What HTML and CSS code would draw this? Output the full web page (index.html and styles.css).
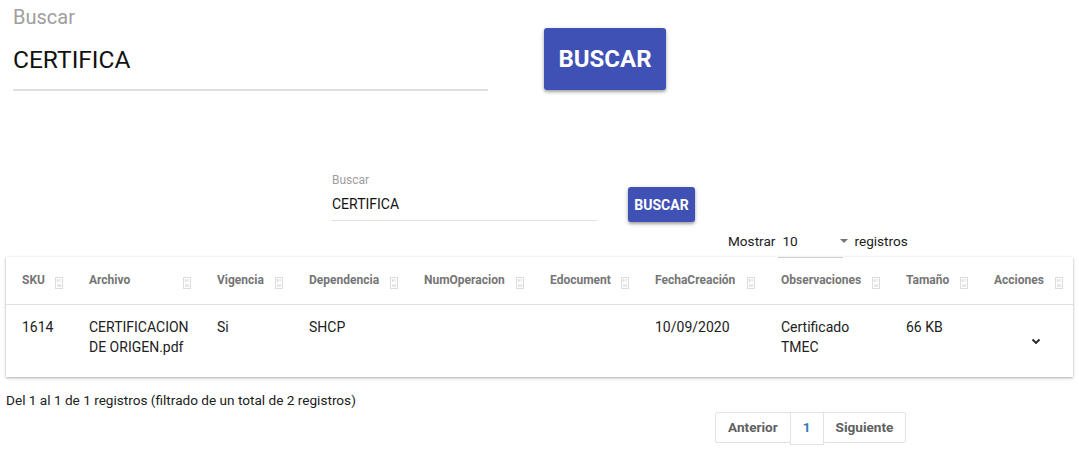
FILE: index.html
```html
<!DOCTYPE html>
<html lang="es">
<head>
<meta charset="utf-8">
<link rel="stylesheet" href="styles.css">
</head>
<body>
<div class="top-search">
  <div class="field big">
    <div class="label">Buscar</div>
    <div class="value">CERTIFICA</div>
  </div>
  <button class="btn big-btn">BUSCAR</button>
</div>

<div class="small-search">
  <div class="field small">
    <div class="label">Buscar</div>
    <div class="value">CERTIFICA</div>
  </div>
  <button class="btn small-btn">BUSCAR</button>
</div>

<div class="length">
  <span>Mostrar</span>
  <span class="select"><span>10</span><span class="caret"></span></span>
  <span>registros</span>
</div>

<div class="card">
  <table class="grid">
    <colgroup>
      <col style="width:67px"><col style="width:128px"><col style="width:92px"><col style="width:115px"><col style="width:126px"><col style="width:105px"><col style="width:126px"><col style="width:125px"><col style="width:88px"><col style="width:95px">
    </colgroup>
    <thead>
      <tr>
        <th><div class="th"><span>SKU</span><span class="sort"><i>E1</i><i>5E</i></span></div></th>
        <th><div class="th"><span>Archivo</span><span class="sort"><i>E1</i><i>50</i></span></div></th>
        <th><div class="th"><span>Vigencia</span><span class="sort"><i>E1</i><i>50</i></span></div></th>
        <th><div class="th"><span>Dependencia</span><span class="sort"><i>E1</i><i>50</i></span></div></th>
        <th><div class="th"><span>NumOperacion</span><span class="sort"><i>E1</i><i>50</i></span></div></th>
        <th><div class="th"><span>Edocument</span><span class="sort"><i>E1</i><i>50</i></span></div></th>
        <th><div class="th"><span>FechaCreación</span><span class="sort"><i>E1</i><i>50</i></span></div></th>
        <th><div class="th"><span>Observaciones</span><span class="sort"><i>E1</i><i>50</i></span></div></th>
        <th><div class="th"><span>Tamaño</span><span class="sort"><i>E1</i><i>50</i></span></div></th>
        <th><div class="th"><span>Acciones</span><span class="sort"><i>E1</i><i>50</i></span></div></th>
      </tr>
    </thead>
    <tbody>
      <tr>
        <td>1614</td>
        <td>CERTIFICACION DE ORIGEN.pdf</td>
        <td>Si</td>
        <td>SHCP</td>
        <td></td>
        <td></td>
        <td>10/09/2020</td>
        <td>Certificado TMEC</td>
        <td>66 KB</td>
        <td class="actions"><svg class="chev" width="10" height="7" viewBox="0 0 10 7"><path d="M1.5 1.5 L5 5 L8.5 1.5" fill="none" stroke="#222" stroke-width="1.8"/></svg></td>
      </tr>
    </tbody>
  </table>
</div>

<div class="info">Del 1 al 1 de 1 registros (filtrado de un total de 2 registros)</div>

<div class="pager">
  <span class="pg">Anterior</span>
  <span class="pg active">1</span>
  <span class="pg">Siguiente</span>
</div>
</body>
</html>
```

FILE: styles.css
```css
* { box-sizing: border-box; }
body {
  margin: 0;
  font-family: Roboto, "Liberation Sans", Arial, sans-serif;
  color: #212121;
  background: #fff;
  width: 1079px;
  height: 450px;
  overflow: hidden;
}
.top-search {
  display: flex;
  align-items: flex-start;
  padding: 5px 0 0 13px;
  height: 160px;
}
.field .label { color: #9e9e9e; }
.field.big { width: 475px; border-bottom: 2px solid #e0e0e0; height: 86px; }
.field.big .label { font-size: 20px; line-height: 24px; }
.field.big .value { font-size: 24.5px; line-height: 30px; margin-top: 16px; color: #111; }
.btn {
  background: #3f51b5;
  color: #fff;
  border: none;
  border-radius: 3px;
  font-family: Roboto, "Liberation Sans", Arial, sans-serif;
  font-weight: 700;
  box-shadow: 0 2px 3px rgba(0,0,0,0.3), 0 1px 6px rgba(0,0,0,0.12);
  padding: 0;
}
.big-btn {
  margin-left: 56px;
  margin-top: 23px;
  width: 122px;
  height: 62px;
  font-size: 24px;
}
.small-search {
  display: flex;
  align-items: flex-start;
  padding-left: 332px;
  height: 68px;
  margin-top: 13px;
}
.field.small { width: 265px; border-bottom: 1px solid #e0e0e0; height: 48px; }
.field.small .label { font-size: 12px; line-height: 14px; }
.field.small .value { font-size: 14px; line-height: 16px; margin-top: 9px; color: #111; }
.small-btn {
  margin-left: 31px;
  margin-top: 14px;
  width: 67px;
  height: 35px;
  font-size: 14px;
}
.length {
  display: flex;
  align-items: center;
  padding-left: 728px;
  font-size: 13.6px;
  height: 19px;
  margin-top: -10px;
  color: #212121;
}
.select {
  display: inline-flex;
  align-items: center;
  justify-content: space-between;
  width: 69px;
  margin-left: 7px;
  padding: 0 3px 0 0;
  height: 19px;
  position: relative;
}
.select::after {
  content: "";
  position: absolute;
  left: -4px; right: 8px; bottom: -8px;
  border-bottom: 1px solid #cfcfcf;
}
.caret {
  width: 0; height: 0;
  border-left: 4px solid transparent;
  border-right: 4px solid transparent;
  border-top: 4px solid #757575;
}
.length > span:last-child { margin-left: 3px; }
.card {
  margin: 7px 6px 0 6px;
  width: 1067px;
  background: #fff;
  box-shadow: 0 1px 3px rgba(0,0,0,0.22), 0 1px 2px rgba(0,0,0,0.14);
}
.grid {
  width: 100%;
  border-collapse: collapse;
  table-layout: fixed;
}
.grid th {
  height: 47px;
  padding: 0 10px 0 16px;
  border-bottom: 1px solid #e0e0e0;
  text-align: left;
  vertical-align: middle;
}
.th {
  display: flex;
  justify-content: space-between;
  align-items: center;
  font-size: 12px;
  font-weight: 700;
  color: #757575;
  white-space: nowrap;
}
.sort {
  display: inline-flex;
  flex-direction: column;
  align-items: center;
  justify-content: center;
  width: 8px;
  height: 12px;
  border: 1px solid #dcdcdc;
  margin-top: 6px;
  flex: none;
}
.sort i {
  font-style: normal;
  font-size: 4px;
  line-height: 5px;
  color: #c4c4c4;
  font-weight: 400;
}
.grid td {
  padding: 12px 10px 14px 16px;
  font-size: 14px;
  line-height: 20px;
  vertical-align: top;
  height: 73px;
  color: #212121;
}
.grid td.actions { vertical-align: middle; text-align: right; padding-right: 32px; }
.chev { display: inline-block; margin-top: 0; }
.info {
  font-size: 13.6px;
  padding-left: 6px;
  margin-top: 15px;
  line-height: 16px;
}
.pager {
  display: flex;
  margin: 4px 0 0 715px;
  align-items: flex-start;
}
.pg {
  border: 1px solid #e2e2e2;
  height: 31px;
  line-height: 29px;
  font-size: 13.6px;
  font-weight: 700;
  color: #616161;
  padding: 0 12px;
  border-radius: 2px;
}
.pg + .pg { margin-left: -1px; }
.pg.active { color: #337ab7; height: 33px; padding: 0 12px; border-radius: 0; }
.pg:last-child { padding: 0 12px; }
```
